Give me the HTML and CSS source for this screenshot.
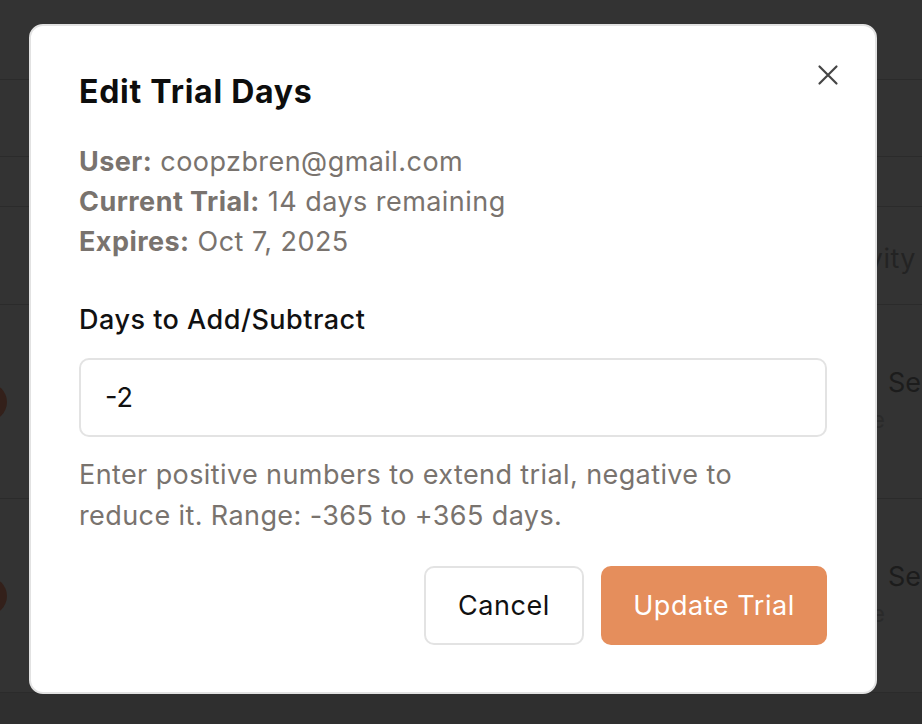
FILE: index.html
```html
<!DOCTYPE html>
<html lang="en">
<head>
<meta charset="utf-8">
<title>Edit Trial Days</title>
<link rel="stylesheet" href="styles.css">
</head>
<body>
<div class="page">
  <div class="row r1"></div>
  <div class="row r2"></div>
  <div class="row r3"></div>
  <div class="row r4"><span class="head-text">Activity</span></div>
  <div class="row r5">
    <span class="avatar"></span>
    <div class="cell-right"><span class="cell-main">Sent</span><span class="cell-sub">Active</span></div>
  </div>
  <div class="row r6">
    <span class="avatar"></span>
    <div class="cell-right"><span class="cell-main">Sent</span><span class="cell-sub">Active</span></div>
  </div>
  <div class="row r7"></div>
</div>

<div class="overlay">
  <div class="modal" role="dialog" aria-labelledby="modal-title">
    <button class="close" aria-label="Close">
      <svg width="22" height="22" viewBox="0 0 22 22" fill="none" stroke="#454545" stroke-width="2.2" stroke-linecap="round"><path d="M2.5 2.5 L19.5 19.5 M19.5 2.5 L2.5 19.5"/></svg>
    </button>
    <h2 class="title" id="modal-title">Edit Trial Days</h2>
    <div class="info">
      <p><strong>User:</strong> coopzbren@gmail.com</p>
      <p><strong>Current Trial:</strong> 14 days remaining</p>
      <p><strong>Expires:</strong> Oct 7, 2025</p>
    </div>
    <label class="label" for="days">Days to Add/Subtract</label>
    <input class="input" id="days" type="text" value="-2">
    <p class="help">Enter positive numbers to extend trial, negative to reduce it. Range: -365 to +365 days.</p>
    <div class="actions">
      <button class="btn btn-cancel">Cancel</button>
      <button class="btn btn-primary">Update Trial</button>
    </div>
  </div>
</div>
</body>
</html>
```
FILE: styles.css
```css
* { box-sizing: border-box; }
html, body { margin: 0; padding: 0; }
body {
  background: #2f2f2f;
  font-family: Inter, "Noto Sans", sans-serif;
  width: 922px;
  height: 724px;
  overflow: hidden;
}
.page {
  display: flex;
  flex-direction: column;
  background: #333333;
}
.row {
  border-bottom: 1px solid #2b2b2b;
  display: flex;
  align-items: center;
  justify-content: space-between;
}
.r1 { height: 80px; }
.r2 { height: 77px; }
.r3 { height: 50px; }
.r4 { height: 98px; justify-content: flex-end; }
.r5, .r6 { height: 194px; }
.r7 { height: 40px; border-bottom: none; background: #2f2f2f; }
.head-text {
  font-size: 27px;
  letter-spacing: 0.5px;
  color: #232323;
  margin-right: 6px;
  padding-top: 6px;
}
.avatar {
  width: 38px;
  height: 38px;
  border-radius: 50%;
  background: #33201a;
  margin-left: -31px;
}
.cell-right {
  display: flex;
  flex-direction: column;
  align-items: flex-start;
  width: 152px;
  white-space: nowrap;
}
.cell-main {
  font-size: 27px;
  line-height: 32px;
  color: #1c1c1c;
  padding-left: 118px;
}
.cell-sub {
  font-size: 23px;
  line-height: 32px;
  color: #2a2a2a;
  width: 115px;
  text-align: right;
  margin-top: 5px;
}

.overlay {
  position: fixed;
  inset: 0;
  padding: 24px 0 0 29px;
}
.modal {
  position: relative;
  width: 848px;
  height: 670px;
  background: #fff;
  border: 2px solid #e2e2e2;
  border-radius: 14px;
  padding: 46px 48px 0 48px;
  display: flex;
  flex-direction: column;
}
.close {
  position: absolute;
  top: 38px;
  right: 36px;
  width: 22px;
  height: 22px;
  padding: 0;
  border: none;
  background: none;
}
.close svg { display: block; }
.title {
  margin: 0;
  font-size: 32px;
  line-height: 40px;
  font-weight: 700;
  color: #0d0d0d;
  letter-spacing: 0.75px;
}
.info {
  margin-top: 30px;
  color: #79736e;
  font-size: 27px;
  line-height: 40px;
  letter-spacing: 0.45px;
}
.info p { margin: 0; }
.info strong { font-weight: 700; }
.label {
  margin-top: 40px;
  font-size: 27px;
  line-height: 36px;
  font-weight: 500;
  color: #111;
  letter-spacing: 0.5px;
}
.input {
  margin-top: 20px;
  height: 79px;
  width: 100%;
  border: 2px solid #e3e3e3;
  border-radius: 10px;
  padding: 0 24px;
  font-family: inherit;
  font-size: 27px;
  color: #111;
  outline: none;
}
.help {
  margin: 17px 0 0 0;
  font-size: 27px;
  line-height: 41px;
  color: #79736e;
  letter-spacing: 0.4px;
}
.actions {
  margin-top: 30px;
  display: flex;
  justify-content: flex-end;
  gap: 17px;
}
.btn {
  height: 79px;
  border-radius: 10px;
  font-family: inherit;
  font-size: 27px;
  letter-spacing: 0.55px;
  padding: 0;
}
.btn-cancel {
  width: 160px;
  background: #fff;
  border: 2px solid #e3e3e3;
  color: #111;
}
.btn-primary {
  width: 226px;
  background: #e58e5c;
  border: none;
  color: #fff;
}
```
